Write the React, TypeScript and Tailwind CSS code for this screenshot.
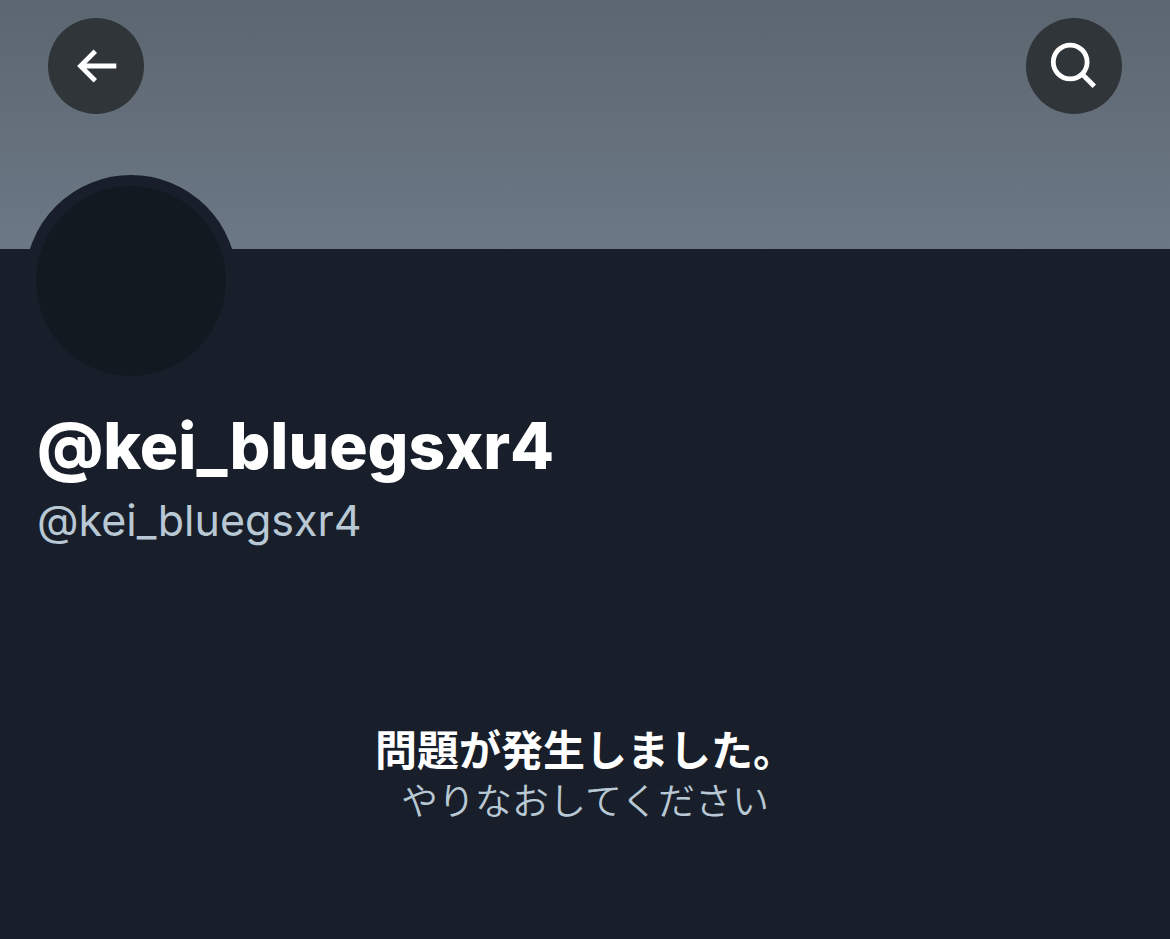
import type { ReactNode } from 'react';

const PROFILE = {
  name: '@kei_bluegsxr4',
  handle: '@kei_bluegsxr4',
};

function RoundButton({ label, children }: { label: string; children: ReactNode }) {
  return (
    <button
      type="button"
      aria-label={label}
      className="grid h-24 w-24 place-items-center rounded-full bg-[#30353a] text-white"
    >
      {children}
    </button>
  );
}

function BackIcon() {
  return (
    <svg viewBox="0 0 48 48" className="h-12 w-12" fill="none" stroke="currentColor" strokeWidth="4.8">
      <path d="M23.3 9.2 8.5 24l14.8 14.8M8.5 24h35.8" />
    </svg>
  );
}

function SearchIcon() {
  return (
    <svg viewBox="0 0 48 48" className="h-12 w-12" fill="none" stroke="currentColor" strokeWidth="4.8">
      <circle cx="20.2" cy="20" r="16.9" />
      <path d="m32 32 12.3 12.3" />
    </svg>
  );
}

export default function App() {
  return (
    <div className="min-h-screen bg-[#181f2a] font-['Inter','Noto_Sans_CJK_JP',sans-serif]">
      <header className="flex h-[249px] items-start justify-between bg-linear-to-b from-[#5c6670] to-[#6c7886] px-12 pt-[18px]">
        <RoundButton label="戻る">
          <BackIcon />
        </RoundButton>
        <RoundButton label="検索">
          <SearchIcon />
        </RoundButton>
      </header>

      <main>
        <section className="px-[37px]">
          {/* Avatar, overlapping the banner */}
          <div className="-mt-[74px] -ml-3 h-[212px] w-[212px] rounded-full border-[11px] border-[#181f2a] bg-[#121920]" />
          <h1 className="mt-5 text-[64px] leading-[78px] font-extrabold text-white">{PROFILE.name}</h1>
          <p className="mt-1 text-[43px] leading-[62px] text-[#b8c8d5]">{PROFILE.handle}</p>
        </section>

        <section className="mt-[172px] px-[37px] text-center" role="alert">
          <h2 className="text-[42px] leading-[56px] font-bold text-white">問題が発生しました。</h2>
          <p className="text-[37px] leading-[46px] font-[350] text-[#b8c8d5]">やりなおしてください</p>
        </section>
      </main>
    </div>
  );
}
